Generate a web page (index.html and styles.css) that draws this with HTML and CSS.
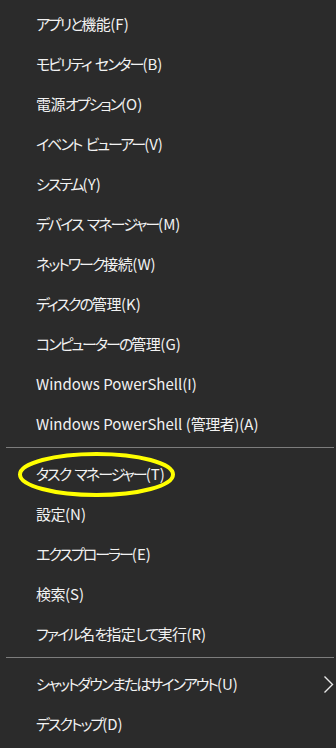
FILE: index.html
```html
<!DOCTYPE html>
<html lang="ja">
<head>
<meta charset="utf-8">
<link rel="stylesheet" href="styles.css">
</head>
<body>
<div class="menu">
  <div class="item"><span class="label">アプリと<span class="kj">機能</span><span class="key">(F)</span></span></div>
  <div class="item"><span class="label">モビリティ センター<span class="key">(B)</span></span></div>
  <div class="item"><span class="label"><span class="kj">電源</span>オプション<span class="key">(O)</span></span></div>
  <div class="item"><span class="label">イベント ビューアー<span class="key">(V)</span></span></div>
  <div class="item"><span class="label">システム<span class="key">(Y)</span></span></div>
  <div class="item"><span class="label">デバイス マネージャー<span class="key">(M)</span></span></div>
  <div class="item"><span class="label">ネットワーク<span class="kj">接続</span><span class="key">(W)</span></span></div>
  <div class="item"><span class="label">ディスクの<span class="kj">管理</span><span class="key">(K)</span></span></div>
  <div class="item"><span class="label">コンピューターの<span class="kj">管理</span><span class="key">(G)</span></span></div>
  <div class="item"><span class="label"><span class="lat">Windows PowerShell</span><span class="key">(I)</span></span></div>
  <div class="item"><span class="label"><span class="lat">Windows PowerShell (</span><span class="kj">管理者</span><span class="key">)(A)</span></span></div>
  <div class="sep"></div>
  <div class="item highlighted">
    <span class="label">タスク マネージャー<span class="key">(T)</span></span>
    <svg class="circle" width="164" height="50" viewBox="0 0 164 50"><ellipse cx="80.5" cy="24.5" rx="76.5" ry="20.5" fill="none" stroke="#ffff00" stroke-width="4"/></svg>
  </div>
  <div class="item"><span class="label"><span class="kj">設定</span><span class="key">(N)</span></span></div>
  <div class="item"><span class="label">エクスプローラー<span class="key">(E)</span></span></div>
  <div class="item"><span class="label"><span class="kj">検索</span><span class="key">(S)</span></span></div>
  <div class="item"><span class="label">ファイル<span class="kj">名</span>を<span class="kj">指定</span>して<span class="kj">実行</span><span class="key">(R)</span></span></div>
  <div class="sep"></div>
  <div class="item sub">
    <span class="label">シャットダウンまたはサインアウト<span class="key">(U)</span></span>
    <svg class="chev" width="12" height="20" viewBox="0 0 12 20"><polyline points="1.5,1.5 9.5,9.5 1.5,17.5" fill="none" stroke="#e8e8e8" stroke-width="1.4"/></svg>
  </div>
  <div class="item"><span class="label">デスクトップ<span class="key">(D)</span></span></div>
</div>
</body>
</html>
```
FILE: styles.css
```css
html, body {
  margin: 0;
  padding: 0;
  background: #2b2b2b;
}
.menu {
  width: 336px;
  height: 748px;
  background: #2b2b2b;
  padding-top: 3px;
  box-sizing: border-box;
  font-family: "Noto Sans CJK JP", "Noto Sans", sans-serif;
  font-feature-settings: "palt";
  font-size: 15px;
  color: #f2f2f2;
}
.item {
  position: relative;
  height: 40px;
  display: flex;
  align-items: center;
  padding-left: 36px;
  box-sizing: border-box;
}
.label {
  white-space: nowrap;
  line-height: 1;
  letter-spacing: -2px;
  word-spacing: 3px;
}
.kj {
  letter-spacing: -0.5px;
}
.key,
.lat {
  letter-spacing: 0;
  word-spacing: 0;
}
.sep {
  height: 1px;
  background: #7d7d7d;
  margin: 4px 2px 5px 6px;
}
.circle {
  position: absolute;
  left: 16px;
  top: -3px;
}
.sub .chev {
  position: absolute;
  left: 323px;
  top: 12px;
}
```
